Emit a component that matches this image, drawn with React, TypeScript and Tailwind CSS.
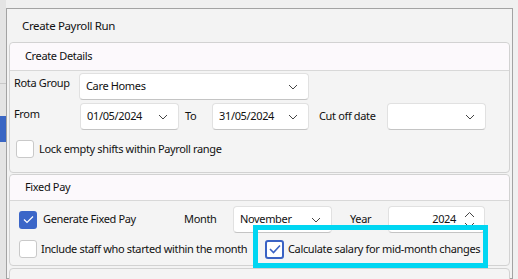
import React from "react"

const font = { fontFamily: '"Noto Sans", "Segoe UI", sans-serif' }

function Chevron() {
  return (
    <svg width="10" height="6" viewBox="0 0 10 6" className="shrink-0">
      <path d="M1 1 L5 5 L9 1" fill="none" stroke="#444" strokeWidth="1" />
    </svg>
  )
}

function Box({ w, children, className = "" }: { w: string; children?: React.ReactNode; className?: string }) {
  return (
    <div
      className={`flex h-[27px] shrink-0 items-center rounded-[4px] border border-[#e1e1e1] border-b-[#c4c4c4] bg-white pl-[6px] pr-[10px] ${w} ${className}`}
    >
      {children}
    </div>
  )
}

function Check({ checked, outline }: { checked?: boolean; outline?: boolean }) {
  if (outline) {
    return (
      <div className="flex h-[19px] w-[19px] shrink-0 items-center justify-center rounded-[3px] border-2 border-[#3a62c4] bg-white">
        <svg width="12" height="10" viewBox="0 0 12 10">
          <path d="M1 5 L4.5 8.5 L11 1.5" fill="none" stroke="#3a62c4" strokeWidth="1.6" />
        </svg>
      </div>
    )
  }
  if (checked) {
    return (
      <div className="flex h-[18px] w-[18px] shrink-0 items-center justify-center rounded-[3px] bg-[#3b66c8]">
        <svg width="11" height="9" viewBox="0 0 11 9">
          <path d="M1 4.5 L4 7.5 L10 1.5" fill="none" stroke="#fff" strokeWidth="1.2" />
        </svg>
      </div>
    )
  }
  return <div className="h-[18px] w-[18px] shrink-0 rounded-[3px] border border-[#c9c9c9] bg-white" />
}

export default function App() {
  return (
    <div
      className="relative flex h-[279px] w-[518px] overflow-hidden whitespace-nowrap bg-[#f0f0f0] text-[11px] tracking-[-0.35px] text-[#111]"
      style={font}
    >
      <div className="relative w-[6px] shrink-0 bg-[#e4e4e4]">
        <div className="absolute left-0 top-[83px] h-px w-[6px] bg-[#c8c8c8]" />
        <div className="absolute left-0 top-[116px] h-[26px] w-[6px] bg-[#3a66c4]" />
      </div>
      <div className="mt-[8px] flex w-[507px] flex-col border border-[#a3a3a3] bg-[#f3f3f3]">
        <div className="flex h-[33px] shrink-0 items-center pl-[15px] text-[11.5px]">Create Payroll Run</div>

        <div className="mx-[2px] shrink-0 rounded-[4px] border border-[#d2d2d2] bg-[#f4f4f4]">
          <div className="flex h-[28px] items-center rounded-t-[4px] border-b border-[#d8d8d8] bg-[#fcf9fc] pl-[15px]">Create Details</div>
          <div className="flex flex-col pl-[4px] pt-[2px] pb-[14px]">
            <div className="flex h-[27px] items-center">
              <span className="w-[65px] shrink-0 self-start pt-[2px]">Rota Group</span>
              <Box w="w-[230px]" className="justify-between">
                <span>Care Homes</span>
                <Chevron />
              </Box>
            </div>
            <div className="mt-[3px] flex h-[27px] items-center">
              <span className="w-[66px] shrink-0 self-start pt-[3px]">From</span>
              <Box w="w-[99px]" className="justify-between">
                <span>01/05/2024</span>
                <Chevron />
              </Box>
              <span className="w-[33px] shrink-0 pl-[6px]">To</span>
              <Box w="w-[97px]" className="justify-between">
                <span>31/05/2024</span>
                <Chevron />
              </Box>
              <span className="w-[78px] shrink-0 pl-[10px]">Cut off date</span>
              <Box w="w-[99px]" className="justify-end">
                <Chevron />
              </Box>
            </div>
            <div className="mt-[10px] flex items-center gap-[5px] pl-[2px]">
              <Check />
              <span>Lock empty shifts within Payroll range</span>
            </div>
          </div>
        </div>

        <div className="mx-[2px] mt-[1px] shrink-0 rounded-[4px] border border-[#d2d2d2] bg-[#f4f4f4]">
          <div className="flex h-[26px] items-center rounded-t-[4px] border-b border-[#d8d8d8] bg-[#fcf9fc] pl-[15px]">Fixed Pay</div>
          <div className="flex flex-col pl-[9px] pt-[5px]">
            <div className="flex h-[27px] items-center">
              <Check checked />
              <span className="w-[147px] shrink-0 pl-[6px]">Generate Fixed Pay</span>
              <span className="w-[49px] shrink-0">Month</span>
              <Box w="w-[99px]" className="justify-between">
                <span>November</span>
                <Chevron />
              </Box>
              <span className="w-[56px] shrink-0 pl-[18px]">Year</span>
              <div className="flex h-[27px] w-[97px] shrink-0 items-center justify-end gap-[8px] rounded-[4px] border border-[#e1e1e1] border-b-[#c4c4c4] bg-white pr-[9px]">
                <span>2024</span>
                <svg width="11" height="18" viewBox="0 0 11 18">
                  <path d="M1 6 L5.5 1.5 L10 6" fill="none" stroke="#444" strokeWidth="1" />
                  <path d="M1 12 L5.5 16.5 L10 12" fill="none" stroke="#444" strokeWidth="1" />
                </svg>
              </div>
            </div>
            <div className="relative flex h-[32px] items-center">
              <div className="flex w-[246px] shrink-0 items-center gap-[4px]">
                <Check />
                <span>Include staff who started within the month</span>
              </div>
              <div className="flex items-center gap-[4px]">
                <Check outline />
                <span>Calculate salary for mid-month changes</span>
              </div>
              <div className="pointer-events-none absolute left-[234px] top-[-8px] h-[43px] w-[235px] border-[5px] border-[#00d6f2]" />
            </div>
          </div>
        </div>

        <div className="mx-[2px] mt-[2px] h-[20px] shrink-0 rounded-t-[4px] border border-[#d2d2d2] bg-[#f4f4f4]" />
      </div>
    </div>
  )
}
